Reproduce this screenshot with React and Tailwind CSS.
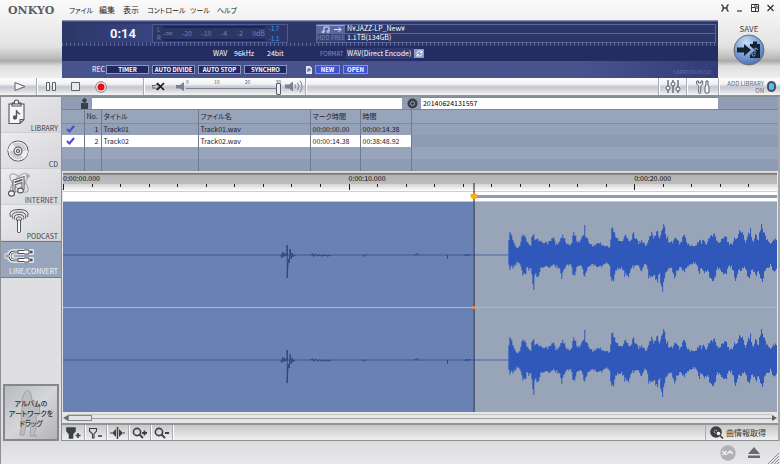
import React from "react";

const SHAPE = [
  [509, 13, 7], [510.5, 22, 15], [512, 18, 12], [514, 13, 13], [517, 8, 8], [520, 8, 8], [522.5, 18, 17], [525, 20, 23],
  [527, 13, 15], [530, 11, 16], [531.5, 10, 13], [533, 20, 23], [534, 21, 33], [534.7, 17, 22], [538, 16, 21], [541, 14, 15], [545, 14, 14],
  [548, 12, 12], [551, 14, 13], [554, 18, 11], [556, 10, 12], [560, 13, 13], [562, 20, 24], [564, 18, 15], [567, 11, 11],
  [571, 9, 10], [573, 15, 15], [574, 21, 22], [576, 20, 18], [578, 13, 11], [581, 15, 10], [583, 17, 15], [584.7, 22, 23],
  [585.3, 33, 23], [586, 18, 18], [588, 15, 13], [592, 10, 11], [595, 9, 11], [599, 13, 12], [602, 11, 12], [605, 10, 9],
  [609, 8, 9], [611, 8, 12], [612, 23, 30], [613, 29, 30], [614.6, 22, 23], [617, 17, 15], [620, 15, 15], [623, 13, 14],
  [625, 19, 20], [627, 20, 21], [628.5, 17, 23], [631, 14, 15], [633, 18, 12], [634, 26, 12], [635, 18, 13], [637, 17, 10],
  [639, 12, 12], [642, 14, 15], [645, 11, 10], [648, 10, 12], [650, 20, 25], [652, 22, 23], [654, 17, 18], [656, 20, 23],
  [658, 22, 27], [660, 17, 15], [662, 25, 32], [663, 28, 37], [664, 28, 28], [665, 33, 22], [666.5, 20, 17], [670, 13, 13],
  [673, 13, 15], [675.6, 17, 22], [677, 15, 18], [681, 11, 12], [683, 17, 15], [685, 20, 17], [687, 13, 13], [690, 10, 10],
  [693, 9, 9], [697, 9, 8], [700, 15, 18], [702, 12, 13], [705, 15, 20], [707, 11, 15], [711, 18, 22], [713, 21, 25],
  [715, 22, 26], [717, 14, 15], [720, 12, 13], [724, 17, 18], [727, 18, 18], [729, 12, 12], [733, 11, 12], [736, 18, 26],
  [738, 17, 18], [741, 25, 17], [743, 22, 15], [746, 13, 11], [749, 23, 23], [751, 25, 22], [753, 13, 15], [757, 20, 20],
  [759, 13, 15], [762, 29, 28], [763, 26, 25], [765, 23, 18], [768, 15, 13], [772, 10, 10], [774, 17, 17], [778, 15, 15],
];

function envelope(x, k) {
  for (let i = 1; i < SHAPE.length; i++) {
    if (x <= SHAPE[i][0]) {
      const a = SHAPE[i - 1];
      const b = SHAPE[i];
      return a[k] + ((b[k] - a[k]) * (x - a[0])) / (b[0] - a[0]);
    }
  }
  return 15;
}

function noise(n) {
  const v = Math.sin(n * 127.1) * 43758.5453;
  return v - Math.floor(v);
}

function burst() {
  const top = [];
  const low = [];
  let n = 0;
  for (let x = 509; x <= 778; x += 1) {
    n += 1;
    const up = Math.max(envelope(x, 1), envelope(x + 0.5, 1)) * (0.84 + 0.26 * noise(n));
    const down = Math.max(envelope(x, 2), envelope(x + 0.5, 2)) * (0.8 + 0.28 * noise(n + 900));
    top.push(`${x - 63},${(-up).toFixed(1)} ${x - 62},${(-up).toFixed(1)}`);
    low.unshift(`${x - 62},${down.toFixed(1)} ${x - 63},${down.toFixed(1)}`);
  }
  return top.concat(low).join(" ");
}

const BURST = burst();

function Channel({ mid }) {
  return (
    <g transform={`translate(0 ${mid})`}>
      <path d="M0 0H410" stroke="#3d5794" strokeWidth="1" />
      <path d="M410 0H446" stroke="#4565b4" strokeWidth="1" />
      <path
        d="M218 0l1 3 1-6 1 5 1-4 1 3 1-2 .5 1V-10V23L225.500 4l1 4 1-14 1 10 1-6 1 4 1-2 1 1M248 0l2-1.500 1 3 2-2.500 2 2 2-1 2 1 3-.8 3 1 3-1M300 0l2 1.500 2-2M352 0l3-1.500 1 2M385 0v4M402 1l2-2 1 2 2-2 1 1"
        fill="none"
        stroke="#29427d"
        strokeWidth=".9"
      />
      <polygon points={BURST} fill="#2f58ba" />
    </g>
  );
}

const base = "font-['Noto_Sans_CJK_JP',sans-serif]";

function Sep() {
  return <span className="h-full w-px bg-[#a9abb3] shadow-[1px_0_0_#fff]" />;
}

function TopBar() {
  return (
    <div className="flex h-5 items-center pl-2">
      <span className="w-[61px] font-['DejaVu_Serif',serif] text-[11px] leading-none font-bold text-[#5d5f66]">ONKYO</span>
      <nav className="flex items-center gap-2 text-[8px] leading-none text-[#222] [font-feature-settings:'palt']">
        <button className="w-[22px] text-left whitespace-nowrap text-[7px]">ファイル</button>
        <button className="w-4 text-left whitespace-nowrap">編集</button>
        <button className="w-4 text-left whitespace-nowrap">表示</button>
        <button className="w-[35px] text-left whitespace-nowrap text-[7px]">コントロール</button>
        <button className="w-[19px] text-left whitespace-nowrap text-[7px]">ツール</button>
        <button className="w-5 text-left whitespace-nowrap text-[7px]">ヘルプ</button>
      </nav>
      <div className="ml-auto flex items-center gap-2 pr-1.5 pb-1 text-[#33353c]">
        <button aria-label="Compact">
          <svg width="8" height="8" viewBox="0 0 8 8" fill="none" stroke="currentColor" strokeWidth="1.300"><path d="M.5.500L2 2v4L.5 7.500M7.500.5L6 2v4l1.500 1.500M2 4h4" /></svg>
        </button>
        <button aria-label="Minimize">
          <svg width="6" height="8" viewBox="0 0 6 8" stroke="currentColor" strokeWidth="1.200"><path d="M0 7h5" /></svg>
        </button>
        <button aria-label="Restore">
          <svg width="8" height="8" viewBox="0 0 8 8" fill="none" stroke="currentColor"><path d="M.5.500h7v7h-7zM.5 3.500h4v4M3 2h3v3" /></svg>
        </button>
        <button aria-label="Close">
          <svg width="7" height="8" viewBox="0 0 7 8" stroke="currentColor" strokeWidth="1.300"><path d="M.5 1l6 6M6.500 1l-6 6" /></svg>
        </button>
      </div>
    </div>
  );
}

const recButtons = ["TIMER", "AUTO DIVIDE", "AUTO STOP", "SYNCHRO"];

function Display() {
  return (
    <div className="flex min-w-0 flex-1 flex-col border-t border-[#8d93b8] bg-[#2c3768] text-[7px] leading-none text-white">
      <div className="flex h-[22px] items-end border-t border-[#4a5590] pr-0.5">
        <div className="flex h-[19px] w-[90px] items-center justify-end bg-linear-to-r from-transparent to-[#38447f] pr-4 font-['Roboto',sans-serif] text-[13px] font-bold text-[#eef2ff]">
          0:14
        </div>
        <div className="flex h-[19px] w-[136px] items-center border border-[#4f5a94] pl-1 text-[#7581b5]">
          <div className="flex w-1.5 flex-col gap-0.5 text-[6px]">
            <span>L</span>
            <span>R</span>
          </div>
          <div className="flex h-[15px] w-[102px] items-center justify-between border-y-2 border-[#1b2452]">
            <span>-∞</span><span>-20</span><span>-10</span><span>-4</span><span>-2</span><span>0dB</span>
          </div>
          <div className="ml-1 flex flex-col gap-1 text-[6px] text-[#35a5e8]">
            <span>-1.7</span>
            <span>-1.1</span>
          </div>
        </div>
        <div className="ml-7 grid h-[19px] flex-1 grid-cols-[28px_1fr] grid-rows-2 border border-[#5a659c]">
          <div className="flex items-center justify-center border-t border-[#9aa3cc] bg-[#5a669e]">
            <svg width="22" height="7" viewBox="0 0 22 7" fill="none" stroke="#dfe4f7"><path d="M4 6V1h5v4M14 3.500h7M18.500 1l2.500 2.500L18.500 6" /><circle cx="3" cy="6" r="1" /><circle cx="8" cy="5.500" r="1" /></svg>
          </div>
          <div className="border-b border-[#5a659c] pl-0.5">N¥JAZZ-LP_New¥</div>
          <div className="bg-[#394476] pt-px text-[6px] whitespace-nowrap text-[#7a85b8]">HDD FREE</div>
          <div className="pl-0.5">1.1TB(134GB)</div>
        </div>
      </div>
      <div className="flex h-[3px] items-end bg-[repeating-linear-gradient(90deg,#5b669c_0_1px,transparent_1px_4px)]" />
      <div className="flex h-[15px] items-center bg-[#232d62]">
        <span className="ml-[151px] w-[21px]">WAV</span>
        <span className="w-[33px]">96kHz</span>
        <span className="w-[53px]">24bit</span>
        <label htmlFor="format" className="w-[26px] text-[6px] text-[#8791c2]">FORMAT</label>
        <select id="format" className="h-[11px] w-[68px] appearance-none bg-[#2f3a72] pl-px">
          <option>WAV(Direct Encode)</option>
        </select>
        <button aria-label="Refresh format" className="flex h-[9px] w-2.5 items-center justify-center bg-[#8f9ac4]">
          <svg width="7" height="7" viewBox="0 0 7 7" fill="none" stroke="#fff"><path d="M1 3.500a2.500 2.500 0 0 1 4.500-1.500M6 .5v2H4M6 3.500A2.500 2.500 0 0 1 1.500 5M1 6.500v-2h2" /></svg>
        </button>
      </div>
      <div className="flex flex-1 items-center gap-[3px] bg-linear-to-r from-[#48538d] from-80% to-[#313c78] pr-1.5 pl-[30px]">
        <span className="w-[11px]">REC</span>
        {recButtons.map((label) => (
          <button key={label} className="flex h-[9px] w-[43px] items-center justify-center border border-[#8b94bd] bg-[#1f2961] text-[6px] font-bold whitespace-nowrap">{label}</button>
        ))}
        <svg className="ml-4" width="6" height="8" viewBox="0 0 6 8"><path d="M0 0h4l2 2v6H0z" fill="#dfe4f7" /><path d="M2 6V3h2v2" fill="none" stroke="#3b467f" /></svg>
        <button className="flex h-[9px] w-[25px] items-center justify-center border border-[#8b94bd] bg-[#3d50cf] text-[6px] font-bold">NEW</button>
        <button className="flex h-[9px] w-[25px] items-center justify-center border border-[#8b94bd] bg-[#3d50cf] text-[6px] font-bold">OPEN</button>
        <span className="mt-1 ml-auto text-[5px] text-[#6570a3]">CARRYON MUSIC</span>
      </div>
    </div>
  );
}

function Header() {
  return (
    <header className="bg-[linear-gradient(#fafafa,#f1f1f1_20px,#e2e2e2_46px,#c0c0c0_57px,#aaa_61px,#dedede_66px,#f0f0f0_78px)]">
      <TopBar />
      <div className="flex h-[58px]">
        <div className="w-[62px]" />
        <Display />
        <div className="flex w-[62px] flex-col items-center pt-1 text-[#3c3e46]">
          <label htmlFor="save" className="text-[8px] leading-[10px]">SAVE</label>
          <button id="save" aria-label="Save">
            <svg width="32" height="32" viewBox="0 0 32 32">
              <defs>
                <radialGradient id="ball" cx=".4" cy=".25" r=".8"><stop offset="0" stopColor="#c9defa" /><stop offset=".5" stopColor="#7fa3dc" /><stop offset="1" stopColor="#4a6fb0" /></radialGradient>
              </defs>
              <circle cx="16" cy="16" r="15" fill="url(#ball)" stroke="#676c78" />
              <path d="M4 13.500h7v-3.500l7 6-7 6v-3.500H4z" fill="#17222f" />
              <path d="M17 10h3V7.500h4V10h3v14h-10v-3l5-5-5-4z" fill="#17222f" />
              <path d="M22 20v-6l3 1.500M22 20.500a1.500 1.300 0 1 1-1.500-1" fill="none" stroke="#7fa3dc" />
            </svg>
          </button>
        </div>
      </div>
    </header>
  );
}

const ctl = "flex h-full items-center justify-center";

function Transport() {
  return (
    <div className="flex h-[19px] items-center border-b-2 border-[#8b8f98] bg-[linear-gradient(#fdfdfd,#f2f2f4_6px,#c3c6ce_9px,#d4d6dc_12px,#f6f6f8)] text-[#5b606d]">
      <button aria-label="Play" className={`${ctl} w-9`}>
        <svg className="ml-1" width="12" height="9" viewBox="0 0 12 9" fill="#f5f5f5" stroke="currentColor"><path d="M1 .5v8l10-4z" /></svg>
      </button>
      <Sep />
      <button aria-label="Pause" className={`${ctl} w-7`}>
        <svg width="10" height="9" viewBox="0 0 10 9" fill="#f5f5f5" stroke="currentColor"><path d="M.5.500h3v8h-3zM6.500.5h3v8h-3z" /></svg>
      </button>
      <button aria-label="Stop" className={`${ctl} w-5`}>
        <svg width="9" height="9" viewBox="0 0 9 9" fill="#e8e8ec" stroke="currentColor"><path d="M.5.500h8v8h-8z" /></svg>
      </button>
      <button aria-label="Record" className={`${ctl} w-8`}>
        <svg width="12" height="12" viewBox="0 0 12 12"><circle cx="6" cy="6" r="5.300" fill="#f1f1f4" stroke="#7c7f88" /><circle cx="6" cy="6" r="3.500" fill="#f00a0a" /></svg>
      </button>
      <span className="w-[26px]" />
      <Sep />
      <button aria-label="Mute" className={`${ctl} w-[28px]`}>
        <svg width="13" height="9" viewBox="0 0 13 9" fill="none"><path d="M0 3.500h3L6 1.500v6L3 6H0z" stroke="#5b606d" /><path d="M5 1l7 7M12 1L5 8" stroke="#111" strokeWidth="1.600" /></svg>
      </button>
      <svg className="ml-1" width="10" height="9" viewBox="0 0 10 9"><path d="M0 3h4l4-3v9L4 6.500H0z" fill="#7c818c" /></svg>
      <div className="flex h-full w-[95px] flex-col leading-none">
        <div className="flex h-[5px] justify-between pt-px text-[5px] leading-[5px]">
          <span>0</span><span>10</span><span>20</span><span>30</span>
        </div>
        <input
          type="range"
          aria-label="Volume"
          defaultValue="100"
          className="h-[11px] w-full appearance-none bg-[linear-gradient(#7d828e,#7d828e)] bg-[length:100%_1px] bg-center bg-no-repeat [&::-webkit-slider-thumb]:h-[12px] [&::-webkit-slider-thumb]:w-[5px] [&::-webkit-slider-thumb]:appearance-none [&::-webkit-slider-thumb]:rounded-[1px] [&::-webkit-slider-thumb]:border [&::-webkit-slider-thumb]:border-[#5b606d] [&::-webkit-slider-thumb]:bg-[#eee]"
        />
      </div>
      <svg className="ml-1" width="18" height="13" viewBox="0 0 18 13" fill="none" stroke="#7c818c"><path d="M0 4.500h4l4-3v10L4 8.500H0z" fill="#7c818c" stroke="none" /><path d="M10 4.500q1.500 2 0 4M12.500 2.500q3 4 0 8M15 .7q4 5.500 0 11.600" /></svg>
      <span className="w-0.5" />
      <Sep />
      <span className="flex-1" />
      <Sep />
      <button aria-label="Equalizer" className={`${ctl} w-[27px]`}>
        <svg width="16" height="13" viewBox="0 0 16 13" fill="#f4f4f6" stroke="currentColor"><path d="M3 0v13M8 0v13M13 0v13" strokeWidth="1.300" /><circle cx="3" cy="8" r="2" /><circle cx="8" cy="4" r="2" /><circle cx="13" cy="9" r="2" /></svg>
      </button>
      <Sep />
      <button aria-label="Settings" className={`${ctl} w-[31px]`}>
        <svg width="14" height="14" viewBox="0 0 14 14" fill="#f4f4f6" stroke="currentColor"><path d="M.7 1v3l2 2v6.500a1 1 0 0 0 2 0V6l2-2V1L5 1v2H2.500V1zM10 1h2v4l1 2v5.500q-2 1.500-4 0V7l1-2z" /></svg>
      </button>
      <Sep />
      <div className="flex w-[61px] items-center justify-end gap-[3px] pr-1">
        <label htmlFor="addlib" className="flex flex-col text-right text-[6px] leading-[7px] whitespace-nowrap text-[#666973]">
          <span>ADD LIBRARY</span>
          <span>ON</span>
        </label>
        <button id="addlib" aria-label="Add library" className="h-[11px] w-[9px] rounded-full border-2 border-[#4b505c] bg-[#4fc0f5]" />
      </div>
    </div>
  );
}

const line = { fill: "none", stroke: "#55575e", strokeWidth: 1.1 };

const sideItems = [
  {
    label: "LIBRARY",
    icon: (
      <svg width="20" height="28" viewBox="0 0 20 28" {...line}>
        <path d="M2 5h15v15.500l-4 4H2zM17 20.500h-4v4M5 7V4h2.500V2q2-2 4 0v2H14v3z" fill="#f6f6f6" />
        <path d="M9.500 18v-7q.5 3 3.500 4" strokeWidth="1.400" /><circle cx="8" cy="18.500" r="1.600" fill="#4b4d55" />
      </svg>
    ),
  },
  {
    label: "CD",
    icon: (
      <svg width="22" height="28" viewBox="0 0 22 28" {...line}>
        <circle cx="11" cy="16" r="10" fill="#cfcfd2" /><circle cx="11" cy="16" r="9" stroke="#f5f5f5" /><path d="M11 16L5 8q-4 4-4 8zM11 16l6 8q4-4 4-8z" fill="#eee" stroke="none" /><circle cx="11" cy="16" r="4" fill="#e3e3e5" /><circle cx="11" cy="16" r="1.500" />
      </svg>
    ),
  },
  {
    label: "INTERNET",
    icon: (
      <svg width="24" height="28" viewBox="0 0 24 28" {...line}>
        <ellipse cx="12" cy="12" rx="12" ry="5" transform="rotate(-50 12 12)" stroke="#aaa" /><ellipse cx="12" cy="12" rx="12" ry="5" transform="rotate(45 12 12)" stroke="#aaa" />
        <circle cx="21" cy="5" r="2" fill="#aaa" stroke="none" />
        <path d="M7 21V10l9-3v12M7 13l9-3" strokeWidth="3" /><path d="M7 21V10l9-3v12M7 13l9-3" stroke="#f6f6f6" /><ellipse cx="4.500" cy="22.500" rx="3" ry="2.600" fill="#f6f6f6" /><ellipse cx="13.500" cy="19.500" rx="2.800" ry="2.400" fill="#f6f6f6" />
      </svg>
    ),
  },
  {
    label: "PODCAST",
    icon: (
      <svg width="24" height="28" viewBox="0 0 24 28" {...line} strokeWidth="1">
        <path d="M3.500 10q-3-7.500 8.500-7.500t8.500 7.500M5.500 11.500q-2-6.500 6.500-6.500t6.500 6.500M7.500 12.500q-1.500-5 4.500-5t4.500 5M9.500 13.500q-.8-3.500 2.500-3.500t2.500 3.500" />
        <path d="M10.500 13h3v12q-1.500 1.500-3 0z" fill="#f6f6f6" />
      </svg>
    ),
  },
  {
    label: "LINE/CONVERT",
    active: true,
    icon: (
      <svg width="30" height="28" viewBox="0 0 30 28" fill="none">
        <path d="M3 14h4M15 10h-5q-4 0-4 4t4 4h5M27 10h1M27 18h1M14 10h12M14 18h12" stroke="#f4f6fa" strokeWidth="6" strokeLinecap="round" opacity=".75" />
        <path d="M1 14h6M15 10h-5q-4 0-4 4t4 4h5M26 10h2.500M26 18h2.500" stroke="#4b4d55" strokeWidth="2.600" />
        <path d="M1 14h6M15 10h-5q-4 0-4 4t4 4h5" stroke="#fff" />
        <path d="M14 8.500h6V8h5v4h-5v-.5h-6zM14 16.500h6V16h5v4h-5v-.5h-6z" fill="#fff" stroke="#4b4d55" />
      </svg>
    ),
  },
];

function Sidebar() {
  return (
    <aside className="flex w-[62px] shrink-0 flex-col border-x border-[#8d8f96] bg-[#dfdfe2]">
      {sideItems.map((item) => (
        <button
          key={item.label}
          className={
            item.active
              ? "flex h-[37px] flex-col border-y border-[#6e7b93] bg-[#98a6bd] px-[3px] text-[#f4f5f8]"
              : "flex h-[36px] flex-col border-b border-[#d0d0d4] bg-linear-to-br from-[#ececee] to-[#d5d5da] px-[3px] pt-0.5 pl-1.5 text-[#3c3e46]"
          }
        >
          <span className="flex h-[25px]">{item.icon}</span>
          <span className="w-full text-right text-[7px] leading-[8px]">{item.label}</span>
        </button>
      ))}
      <div className="mx-0.5 mt-auto grid h-[57px] place-items-center border-2 border-[#85878c] bg-linear-to-br from-[#b9babd] via-[#d5d6d8] to-[#b2b3b6] text-center text-[7px] leading-[10px] font-medium text-[#2f3035] [font-feature-settings:'palt']">
        <svg className="col-start-1 row-start-1" width="24" height="48" viewBox="0 0 24 48" fill="#bcbdc0" stroke="#a2a3a7"><path d="M6 3q5-4 6 3l1 5 7 5 1 9-4 2 1 8-3 11 3 1h-7l1-14-3-5-2 9-2 9h-4l2-12-1-9 2-10-1-6z" /></svg>
        <div className="col-start-1 row-start-1 flex flex-col">
          <span>アルバムの</span>
          <span>アートワークを</span>
          <span>ドラッグ</span>
        </div>
      </div>
    </aside>
  );
}

function Fields() {
  return (
    <div className="flex h-[13px] items-stretch border-b border-[#7b8598] bg-[#909db5] text-[7px]">
      <label htmlFor="artist" aria-label="Artist" className="flex w-[30px] items-center justify-end pr-1">
        <svg width="7" height="11" viewBox="0 0 7 11" fill="#3b3d44"><circle cx="3.500" cy="2.500" r="2.200" /><path d="M0 5h7v6H0z" /></svg>
      </label>
      <input id="artist" className="min-w-0 flex-[311] border-t border-[#888] bg-white" />
      <label htmlFor="album" aria-label="Album" className="flex w-[19px] items-center justify-end pr-[3px]">
        <svg width="11" height="11" viewBox="0 0 11 11"><circle cx="5.500" cy="5.500" r="5" fill="#3b3d44" /><circle cx="5.500" cy="5.500" r="2" fill="none" stroke="#9aa6ba" /></svg>
      </label>
      <input id="album" defaultValue="20140624131557" className="min-w-0 flex-[296] border-t border-[#888] bg-white pl-0.5 text-black" />
      <span className="w-[60px]" />
    </div>
  );
}

function Check() {
  return (
    <svg className="mx-auto ml-0.5" width="9" height="8" viewBox="0 0 9 8" fill="none" stroke="#4a48d8" strokeWidth="2"><path d="M1 4l2.500 2.500L8 1" /></svg>
  );
}

const cell = "border-r border-[#6f7b92] px-0.5 py-0 text-left font-normal whitespace-nowrap";

function Tracks() {
  return (
    <table className="w-full table-fixed border-collapse text-[7px] leading-[11px] text-[#1f222b]">
      <colgroup>
        <col className="w-[22px]" /><col className="w-[17px]" /><col className="w-[97px]" /><col className="w-[112px]" /><col className="w-[50px]" /><col className="w-[51px]" /><col />
      </colgroup>
      <thead>
        <tr className="h-[13px] border-b border-[#7f8ba3] bg-[#98a4ba] [font-feature-settings:'palt']">
          <th className={cell} /><th className={cell}>No.</th><th className={cell}>タイトル</th><th className={cell}>ファイル名</th><th className={cell}>マーク時間</th><th className={cell}>時間</th><th />
        </tr>
      </thead>
      <tbody>
        <tr className="h-3 bg-[#94a1b8]">
          <td className={cell}><Check /></td><td className="border-r border-[#6f7b92] pr-0.5 text-right">1</td><td className={cell}>Track01</td><td className={cell}>Track01.wav</td><td className={cell}>00:00:00.00</td><td className={cell}>00:00:14.38</td><td />
        </tr>
        <tr className="h-3 bg-white">
          <td className={cell}><Check /></td><td className="border-r border-[#6f7b92] pr-0.5 text-right">2</td><td className={cell}>Track02</td><td className={cell}>Track02.wav</td><td className={cell}>00:00:14.38</td><td className={cell}>00:38:48.92</td><td className="bg-[#8d9bb4]" />
        </tr>
        <tr className="h-3 bg-[#98a4ba]"><td className={cell} /><td className={cell} /><td className={cell} /><td className={cell} /><td className={cell} /><td className={cell} /><td /></tr>
        <tr className="h-3 bg-[#8d9bb4]"><td className={cell} /><td className={cell} /><td className={cell} /><td className={cell} /><td className={cell} /><td className={cell} /><td /></tr>
      </tbody>
    </table>
  );
}

const times = ["0:00:00.000", "0:00:10.000", "0:00:20.000"];
const ticks = Array.from({ length: 10 }, (_, i) => i);

function Timeline() {
  return (
    <section className="relative border-r border-[#e8e8e8] pl-px">
      <div className="flex h-[13px] overflow-hidden border-t-2 border-[#d9d9d9] bg-linear-to-b from-[#777] from-10% via-[#b4b4b4] via-20% to-[#bdbdbd]">
        {times.map((t) => (
          <span key={t} className="w-2/5 shrink-0 text-[7px] leading-[11px] text-black">{t}</span>
        ))}
      </div>
      <div className="flex h-2 overflow-hidden border-b border-[#cfcfcf] bg-linear-to-b from-[#d4d4d4] to-white">
        {times.map((t) => (
          <div key={t} className="grid w-2/5 shrink-0 grid-cols-10">
            {ticks.map((n) => (
              <span key={n} className={n === 0 ? "h-1.5 border-l border-[#222]" : "h-[3px] border-l border-[#222]"} />
            ))}
          </div>
        ))}
      </div>
      <div className="flex h-[10px] items-center border-b border-[#c5cad6] bg-white">
        <div className="ml-[57.6%] h-[3px] flex-1 bg-[#8f9bb5]" />
      </div>
      <svg className="block h-[210px] w-full" viewBox="0 0 715 210" preserveAspectRatio="none">
        <rect width="411" height="210" fill="#6a82b3" />
        <rect x="411" width="304" height="210" fill="#98a4b8" />
        <Channel mid="53" />
        <Channel mid="158" />
        <path d="M0 105.500H715" stroke="#b3b8c4" />
      </svg>
      <div className="absolute top-3 bottom-0 left-[57.6%] flex w-[7px] -translate-x-1/2 justify-center">
        <span className="w-px bg-[#111b33]" />
        <span className="absolute top-[11px] h-[5px] w-[7px] rounded-b-full bg-[#f7ad12]" />
        <span className="absolute bottom-[103px] size-[3px] bg-[#ec8a35]" />
      </div>
    </section>
  );
}

function Scroller() {
  return (
    <div className="flex h-[13px] items-center border-b-2 border-[#929498] bg-[#e6e6e6] px-px">
      <button aria-label="Scroll left"><svg width="5" height="6" viewBox="0 0 5 6"><path d="M5 0v6L0 3z" fill="#6e7075" /></svg></button>
      <div className="flex h-[7px] flex-1 items-center border-t border-[#c4c4c4]">
        <span className="h-[6px] w-6 border border-[#85878c] bg-[#e3e3e3]" />
        <span className="h-px flex-1 bg-[#9b9da1]" />
      </div>
      <button aria-label="Scroll right"><svg width="5" height="6" viewBox="0 0 5 6"><path d="M0 0v6l5-3z" fill="#5d5f64" /></svg></button>
    </div>
  );
}

const tools = [
  ["Add marker", <g key="a"><path d="M1 1h8v3L6.500 7v4h-3V7L1 4z" fill="#3a414b" /><path d="M9.500 8.500h5M12 6v5" /></g>],
  ["Remove marker", <g key="b"><path d="M1.500 1.500h7v2.500L6 7v4H4.500V7L1.500 4z" strokeWidth="1.100" /><path d="M10 9h4" /></g>],
  ["Split", <g key="c"><path d="M7.500 0v12" strokeWidth="1.500" /><path d="M0 6h2M13 6h2" strokeWidth="1.200" /><path d="M2 6l4-4v8zM13 6L9 2v8z" fill="#3a414b" stroke="none" /></g>],
  ["Zoom in", <g key="d"><circle cx="5" cy="5" r="3.600" /><path d="M7.500 7.500l3.500 3.500M10 6h5M12.500 3.500v5" strokeWidth="1.800" /></g>],
  ["Zoom out", <g key="e"><circle cx="5" cy="5" r="3.600" /><path d="M7.500 7.500l3.500 3.500M11 6h4" strokeWidth="1.800" /></g>],
];

function Toolbar() {
  return (
    <div className="flex h-4 items-center border-b border-[#8d8f94] bg-linear-to-b from-[#c9c9c9] to-[#efefef] pl-px">
      {tools.map(([label, art]) => (
        <React.Fragment key={label}>
          <button aria-label={label} className="flex w-[21px] justify-center">
            <svg width="15" height="12" viewBox="0 0 15 12" fill="none" stroke="#3a414b" strokeWidth="1.600">{art}</svg>
          </button>
          <Sep />
        </React.Fragment>
      ))}
      <span className="ml-auto h-full w-px bg-[#a9abb3]" />
      <button className="flex items-center gap-0.5 pr-3 pl-1 text-[8px] leading-none text-[#33353a]">
        <svg width="14" height="13" viewBox="0 0 14 13"><circle cx="6" cy="6" r="5.800" fill="#3a3c42" /><circle cx="5.500" cy="5.500" r="1.500" fill="none" stroke="#aaa" /><circle cx="8.500" cy="7.500" r="2.300" fill="#eee" stroke="#3a3c42" /><path d="M10 9.500l3 3" stroke="#3a3c42" strokeWidth="1.600" /></svg>
        曲情報取得
      </button>
    </div>
  );
}

function Footer() {
  return (
    <footer className="flex h-[23px] items-center justify-end gap-3 border-l border-[#8d8f96] bg-linear-to-b from-[#dcdcde] to-[#e8e8ea] pr-px">
      <svg width="16" height="16" viewBox="0 0 16 16" fill="none" stroke="#eee" strokeWidth="1.500"><circle cx="8" cy="8" r="7.700" fill="#b0b1b4" stroke="none" /><path d="M2.500 6l4 4M6.500 6l-4 4M7 9l3-3 3 3" /></svg>
      <button aria-label="Eject"><svg width="12" height="11" viewBox="0 0 12 11" fill="#686a70"><path d="M6 0l6 7H0zM0 8.500h12V11H0z" /></svg></button>
      <svg className="-ml-1 self-end" width="11" height="11" viewBox="0 0 11 11" stroke="#8b8d92"><path d="M0 11L11 0M3 11l8-8M6 11l5-5M9 11l2-2" /></svg>
    </footer>
  );
}

export default function App() {
  return (
    <div className={`flex min-h-screen w-full flex-col bg-[#dfdfe2] ${base}`}>
      <Header />
      <Transport />
      <main className="flex">
        <Sidebar />
        <div className="flex min-w-0 flex-1 flex-col border-r-2 border-[#a5a7ac]">
          <Fields />
          <Tracks />
          <Timeline />
          <Scroller />
          <Toolbar />
        </div>
      </main>
      <Footer />
    </div>
  );
}
